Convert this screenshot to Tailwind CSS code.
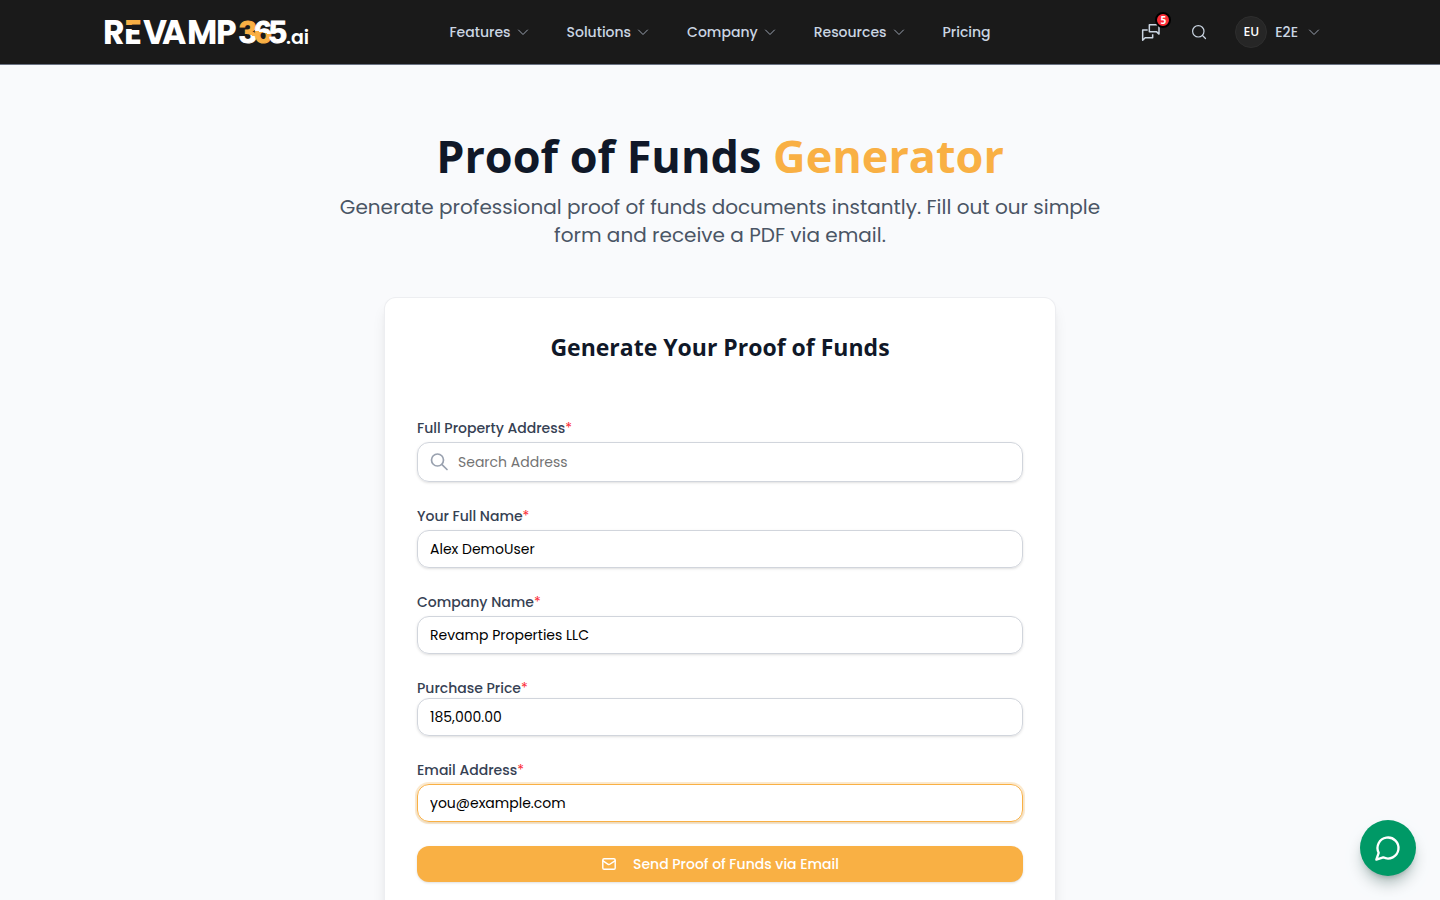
<!DOCTYPE html>
<html lang="en">
<head>
  <meta charset="UTF-8">
  <meta name="viewport" content="width=device-width, initial-scale=1.0">
  <title>Proof of Funds Generator</title>
  <script src="https://cdn.jsdelivr.net/npm/@tailwindcss/browser@4"></script>
</head>
<body class="min-h-screen bg-[#f9fafc] font-['Poppins','Inter',sans-serif] text-gray-900">

  <!-- header -->
  <header class="border-b border-gray-500 bg-[#1a1a1a]">
    <div class="mx-auto flex h-16 max-w-[1240px] items-center justify-between px-5">
      <a href="#" aria-label="Revamp365.ai" class="-ml-4 flex flex-1 items-center">
        <svg class="h-8 w-52 overflow-visible" viewBox="0 0 208 32" font-family="Poppins, Inter, sans-serif" font-weight="700" font-size="33" fill="#fff">
          <defs>
            <linearGradient id="e-fill" gradientUnits="userSpaceOnUse" x1="0" y1="4" x2="0" y2="28">
              <stop offset=".22" stop-color="#f9b044"/>
              <stop offset=".22" stop-color="#1a1a1a"/>
              <stop offset=".38" stop-color="#1a1a1a"/>
              <stop offset=".38" stop-color="#fff"/>
            </linearGradient>
            <linearGradient id="three-fill" gradientUnits="userSpaceOnUse" x1="145" y1="4" x2="139" y2="28">
              <stop offset=".58" stop-color="#f9b044"/>
              <stop offset=".58" stop-color="#fff"/>
            </linearGradient>
            <linearGradient id="six-fill" gradientUnits="userSpaceOnUse" x1="160" y1="4" x2="154" y2="28">
              <stop offset=".5" stop-color="#fff"/>
              <stop offset=".5" stop-color="#f9b044"/>
            </linearGradient>
          </defs>
          <text x="-1" y="28">R</text>
          <text x="20" y="28" fill="url(#e-fill)">E</text>
          <text x="39 58 83 112" y="28">VAMP</text>
          <g font-family="'Liberation Sans', Arial, sans-serif" font-size="32" stroke-width="1">
            <text x="135" y="27" fill="url(#three-fill)" stroke="url(#three-fill)">3</text>
            <text x="150" y="27" fill="url(#six-fill)" stroke="url(#six-fill)">6</text>
            <text x="165" y="27" stroke="#fff">5</text>
          </g>
          <text x="182" y="28" font-size="19" font-weight="600">.ai</text>
        </svg>
      </a>

      <nav class="flex items-center gap-[38px] pl-4 text-sm font-medium text-slate-300">
        <a href="#" class="flex items-center gap-1.5">Features
          <svg class="size-3 text-gray-400" viewBox="0 0 12 12" fill="none" stroke="currentColor" stroke-linecap="round" stroke-linejoin="round"><path d="M1.5 4 6 8.500 10.500 4"/></svg>
        </a>
        <a href="#" class="flex items-center gap-1.5">Solutions
          <svg class="size-3 text-gray-400" viewBox="0 0 12 12" fill="none" stroke="currentColor" stroke-linecap="round" stroke-linejoin="round"><path d="M1.5 4 6 8.500 10.500 4"/></svg>
        </a>
        <a href="#" class="flex items-center gap-1.5">Company
          <svg class="size-3 text-gray-400" viewBox="0 0 12 12" fill="none" stroke="currentColor" stroke-linecap="round" stroke-linejoin="round"><path d="M1.5 4 6 8.500 10.500 4"/></svg>
        </a>
        <a href="#" class="flex items-center gap-1.5">Resources
          <svg class="size-3 text-gray-400" viewBox="0 0 12 12" fill="none" stroke="currentColor" stroke-linecap="round" stroke-linejoin="round"><path d="M1.5 4 6 8.500 10.500 4"/></svg>
        </a>
        <a href="#">Pricing</a>
      </nav>

      <div class="flex flex-1 items-center justify-end text-slate-300">
        <button type="button" aria-label="Messages" class="relative mr-[30px]">
          <svg class="size-5" viewBox="0 0 24 24" fill="none" stroke="currentColor" stroke-width="1.8" stroke-linejoin="round"><path d="M10 3.200h11.600v11.300l-3.100-2.900H10z"/><path d="M8 9.600H2v12.200l3-3h9v-4"/></svg>
          <span class="absolute -top-2.5 left-3.5 flex size-4 items-center justify-center rounded-full border-2 border-black bg-[#fb2c36] font-['Open_Sans',sans-serif] text-[10px] font-bold text-white">5</span>
        </button>
        <button type="button" aria-label="Search" class="mr-7">
          <svg class="size-4" viewBox="0 0 16 16" fill="none" stroke="currentColor" stroke-width="1.2" stroke-linecap="round"><circle cx="7.300" cy="7.300" r="5.700"/><path d="m11.500 11.500 3 3"/></svg>
        </button>
        <button type="button" class="flex items-center gap-2 text-sm font-medium">
          <span class="flex size-8 items-center justify-center rounded-full border border-[#2e2e2e] bg-[#262626] font-['Open_Sans',sans-serif] text-xs font-semibold text-white">EU</span>
          E2E
          <svg class="ml-0.5 size-3 text-gray-400" viewBox="0 0 12 12" fill="none" stroke="currentColor" stroke-linecap="round" stroke-linejoin="round"><path d="M1.5 4 6 8.500 10.500 4"/></svg>
        </button>
      </div>
    </div>
  </header>

  <main class="px-4 pt-16">
    <!-- page title -->
    <div class="mx-auto mb-12 max-w-3xl text-center">
      <h1 class="mb-2.5 font-['Open_Sans',sans-serif] text-[45px] leading-[54px] font-bold text-[#101828]">Proof of Funds <span class="text-[#f9b044]">Generator</span></h1>
      <p class="text-xl text-gray-600">Generate professional proof of funds documents instantly. Fill out our simple form and receive a PDF via email.</p>
    </div>

    <!-- form card -->
    <section class="mx-auto max-w-2xl rounded-xl border border-gray-200/70 bg-white px-8 pt-8 pb-8 shadow-lg">
      <h2 class="mb-[54px] text-center font-['Open_Sans',sans-serif] text-[23px] leading-[34px] font-bold text-[#101828]">Generate Your Proof of Funds</h2>

      <form class="text-sm">
        <div class="mb-6">
          <label for="address" class="mb-1 block font-medium text-gray-700">Full Property Address<span class="font-normal text-red-500">*</span></label>
          <div class="flex h-10 items-center gap-2 rounded-xl border border-gray-300 px-3 shadow-sm">
            <svg class="size-5 text-gray-400" viewBox="0 0 20 20" fill="none" stroke="currentColor" stroke-width="1.7" stroke-linecap="round"><circle cx="7.500" cy="8" r="6"/><path d="m12 12.600 5 4.900"/></svg>
            <input id="address" type="text" placeholder="Search Address" class="min-w-0 grow placeholder-neutral-500 outline-none">
          </div>
        </div>
        <div class="mb-6">
          <label for="name" class="mb-1 block font-medium text-gray-700">Your Full Name<span class="font-normal text-red-500">*</span></label>
          <input id="name" type="text" value="Alex DemoUser" class="block w-full rounded-xl border border-gray-300 px-3 py-2 text-black shadow-sm">
        </div>
        <div class="mb-6">
          <label for="company" class="mb-1 block font-medium text-gray-700">Company Name<span class="font-normal text-red-500">*</span></label>
          <input id="company" type="text" value="Revamp Properties LLC" class="block w-full rounded-xl border border-gray-300 px-3 py-2 text-black shadow-sm">
        </div>
        <div class="mb-6">
          <label for="price" class="block font-medium text-gray-700">Purchase Price<span class="font-normal text-red-500">*</span></label>
          <input id="price" type="text" value="185,000.00" class="block w-full rounded-xl border border-gray-300 px-3 py-2 text-black shadow-sm">
        </div>
        <div class="mb-6">
          <label for="email" class="mb-1 block font-medium text-gray-700">Email Address<span class="font-normal text-red-500">*</span></label>
          <input id="email" type="email" value="you@example.com" class="block w-full rounded-xl border border-[#f9b044] px-3 py-2 text-black shadow-sm ring-2 ring-[#f9b044]/25 outline-none">
        </div>
        <button type="submit" class="flex h-9 w-full items-center justify-center gap-4 rounded-xl bg-[#f9b044] font-medium text-white shadow-sm">
          <svg class="size-4" viewBox="0 0 16 16" fill="none" stroke="currentColor" stroke-width="1.400" stroke-linecap="round" stroke-linejoin="round"><rect x="1.800" y="2.800" width="12.400" height="10.400" rx="1.300"/><path d="m2 4.800 5.200 3.500a1.400 1.400 0 0 0 1.600 0l5.200-3.500"/></svg>
          Send Proof of Funds via Email
        </button>
      </form>
    </section>
  </main>

  <!-- chat bubble -->
  <button type="button" aria-label="Open chat" class="fixed right-6 bottom-6 flex size-14 items-center justify-center rounded-full bg-[#009966] text-white shadow-lg shadow-emerald-950/30">
    <svg class="size-7" viewBox="0 0 24 24" fill="none" stroke="currentColor" stroke-width="2" stroke-linecap="round" stroke-linejoin="round"><path d="M7.900 20A9 9 0 1 0 4 16.100L2 22Z"/></svg>
  </button>

</body>
</html>
